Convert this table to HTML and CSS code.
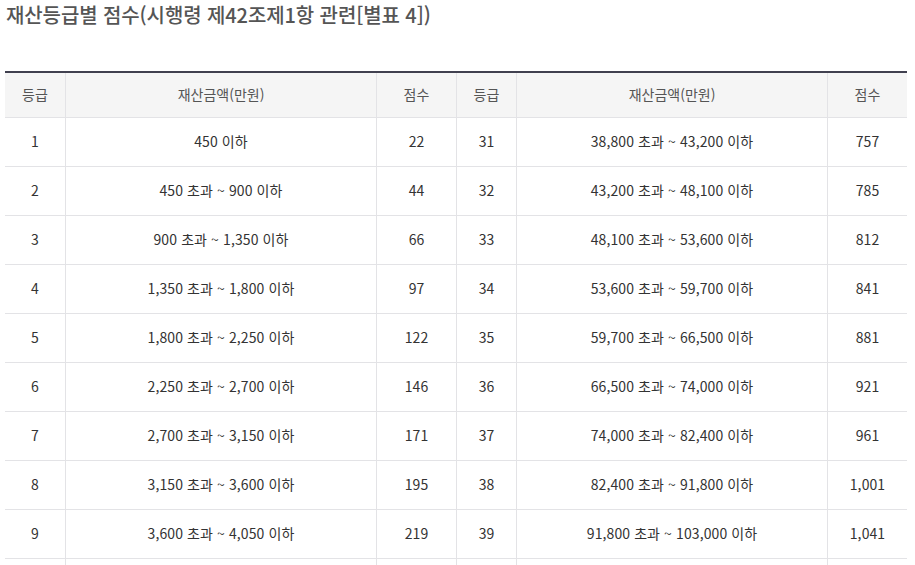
FILE: index.html
```html
<!DOCTYPE html>
<html lang="ko">
<head>
<meta charset="utf-8">
<title>재산등급별 점수</title>
<link rel="stylesheet" href="styles.css">
</head>
<body>
<div class="page">
  <h2 class="title">재산등급별 점수(시행령 제42조제1항 관련[별표 4])</h2>
  <table class="grade-table">
    <colgroup>
      <col class="c-grade"><col class="c-amount"><col class="c-score">
      <col class="c-grade2"><col class="c-amount"><col class="c-score2">
    </colgroup>
    <thead>
      <tr><th>등급</th><th>재산금액(만원)</th><th>점수</th><th>등급</th><th>재산금액(만원)</th><th>점수</th></tr>
    </thead>
    <tbody>
      <tr><td>1</td><td>450 이하</td><td>22</td><td>31</td><td>38,800 초과 ~ 43,200 이하</td><td>757</td></tr>
      <tr><td>2</td><td>450 초과 ~ 900 이하</td><td>44</td><td>32</td><td>43,200 초과 ~ 48,100 이하</td><td>785</td></tr>
      <tr><td>3</td><td>900 초과 ~ 1,350 이하</td><td>66</td><td>33</td><td>48,100 초과 ~ 53,600 이하</td><td>812</td></tr>
      <tr><td>4</td><td>1,350 초과 ~ 1,800 이하</td><td>97</td><td>34</td><td>53,600 초과 ~ 59,700 이하</td><td>841</td></tr>
      <tr><td>5</td><td>1,800 초과 ~ 2,250 이하</td><td>122</td><td>35</td><td>59,700 초과 ~ 66,500 이하</td><td>881</td></tr>
      <tr><td>6</td><td>2,250 초과 ~ 2,700 이하</td><td>146</td><td>36</td><td>66,500 초과 ~ 74,000 이하</td><td>921</td></tr>
      <tr><td>7</td><td>2,700 초과 ~ 3,150 이하</td><td>171</td><td>37</td><td>74,000 초과 ~ 82,400 이하</td><td>961</td></tr>
      <tr><td>8</td><td>3,150 초과 ~ 3,600 이하</td><td>195</td><td>38</td><td>82,400 초과 ~ 91,800 이하</td><td>1,001</td></tr>
      <tr><td>9</td><td>3,600 초과 ~ 4,050 이하</td><td>219</td><td>39</td><td>91,800 초과 ~ 103,000 이하</td><td>1,041</td></tr>
      <tr><td>10</td><td>4,050 초과 ~ 4,500 이하</td><td>243</td><td>40</td><td>103,000 초과 ~ 114,000 이하</td><td>1,081</td></tr>
    </tbody>
  </table>
</div>
</body>
</html>
```

FILE: styles.css
```css
html, body {
  margin: 0;
  padding: 0;
  background: #ffffff;
}

body {
  font-family: "Noto Sans CJK KR", "Noto Sans", sans-serif;
  color: #333333;
}

.page {
  padding: 0 5px;
}

.title {
  margin: 0;
  padding: 0 1px;
  font-size: 20px;
  line-height: 30px;
  font-weight: 500;
  color: #555555;
  letter-spacing: -0.1px;
}

.grade-table {
  margin-top: 41px;
  width: 902px;
  table-layout: fixed;
  border-collapse: separate;
  border-spacing: 0;
  border-top: 2px solid #40404f;
  font-size: 14px;
}

.c-grade { width: 61px; }
.c-amount { width: 311px; }
.c-score { width: 80px; }
.c-grade2 { width: 60px; }
.c-score2 { width: 79px; }

.grade-table th,
.grade-table td {
  padding: 0;
  text-align: center;
  vertical-align: middle;
  border-right: 1px solid #e3e3e6;
  border-bottom: 1px solid #e3e3e6;
  box-sizing: border-box;
}

.grade-table th:last-child,
.grade-table td:last-child {
  border-right: 0;
}

.grade-table th {
  height: 45px;
  padding-bottom: 2px;
  background: #f5f5f5;
  font-weight: 400;
  font-size: 14px;
  color: #555555;
}

.grade-table td {
  height: 49px;
  padding-bottom: 3px;
  color: #333333;
  letter-spacing: 0.1px;
}
```
